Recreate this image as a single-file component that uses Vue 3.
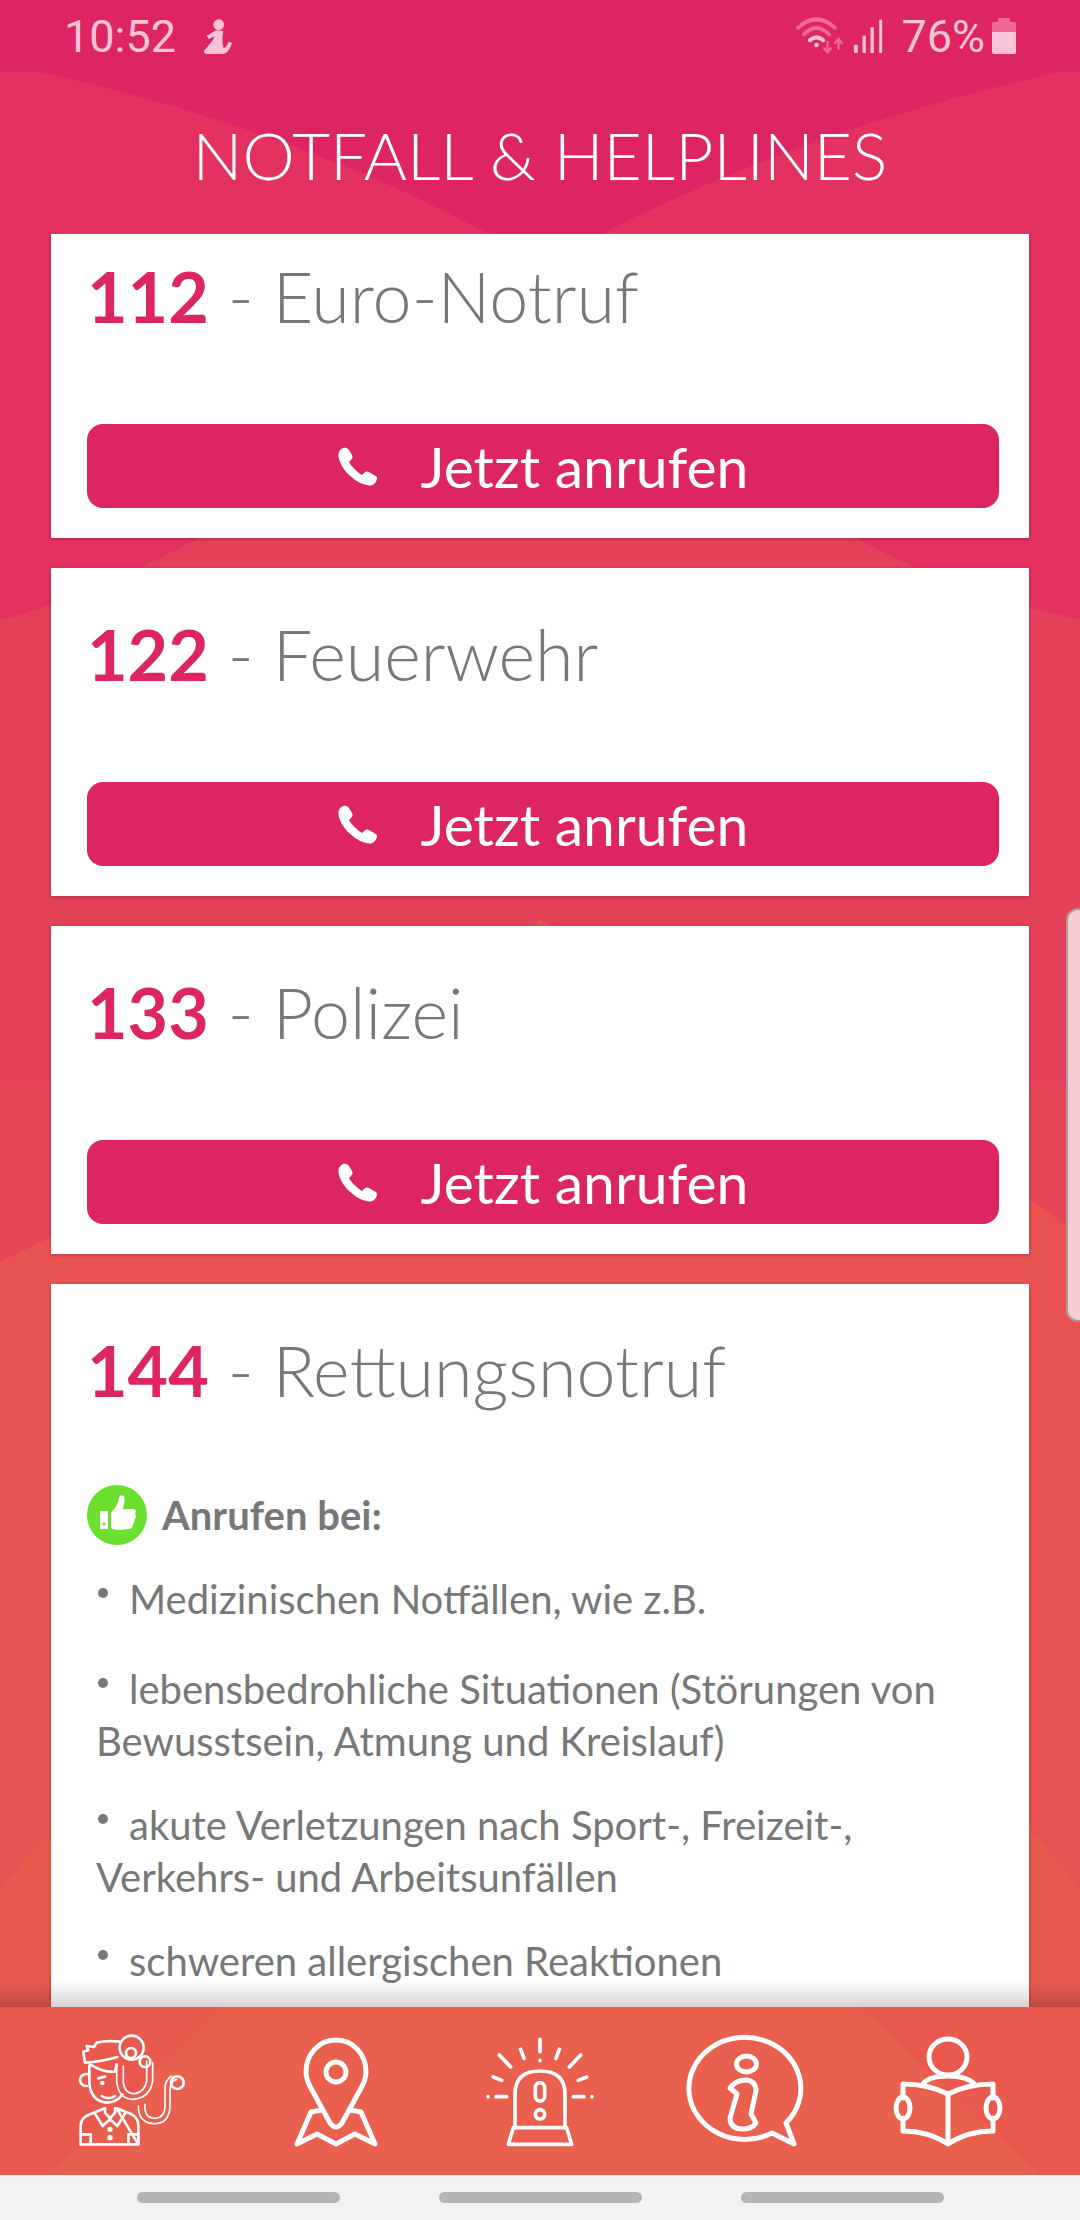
<script setup>
const lines = [
  'Medizinischen Notfällen, wie z.B.',
  'lebensbedrohliche Situationen (Störungen von Bewusstsein, Atmung und Kreislauf)',
  'akute Verletzungen nach Sport-, Freizeit-, Verkehrs- und Arbeitsunfällen',
  'schweren allergischen Reaktionen'
]

const numbers = [
  { nr: '112', name: 'Euro-Notruf' },
  { nr: '122', name: 'Feuerwehr' },
  { nr: '133', name: 'Polizei' }
]
</script>

<template>
  <div class="phone">
    <svg class="bg" viewBox="0 0 1080 2220" width="1080" height="2220" aria-hidden="true">
      <rect width="1080" height="2220" fill="#de2563" />
      <path d="M0 72H40Q300 130 500 240L300 700H0Z" fill="#e3325f" />
      <path d="M1080 72H1060Q800 130 590 240L800 700H1080Z" fill="#e3325f" />
      <path d="M0 620Q120 590 300 480Q440 400 540 400Q680 410 860 540Q950 590 1080 620V2220H0Z" fill="#e4415a" />
      <path d="M0 1085H1080V2220H0Z" fill="#e54558" />
      <path d="M0 1262Q300 1120 540 920Q800 1120 1030 1200L1080 1235V2220H0Z" fill="#e85352" />
      <path d="M0 1890Q60 1810 200 1720L540 1500L860 1700Q1000 1780 1080 1890V2220H0Z" fill="#e9594e" />
      <path d="M50 2175L220 2007H860L1040 2175Z" fill="#ea604f" />
    </svg>

    <div class="statusbar">
      <span class="time">10:52</span>
      <svg class="walker" viewBox="0 0 90 105" width="30" height="35">
        <circle cx="50" cy="17" r="16" />
        <path d="M42 34L14 50L20 60L38 52C34 64 24 76 10 90C2 98 6 105 16 105H62C74 104 84 92 90 72L80 68C78 76 72 84 65 88C60 72 60 52 64 36Z" />
      </svg>
      <div class="spacer"></div>
      <svg class="wifi" viewBox="40 15 155 120" width="52" height="40">
        <path d="M55 50Q110 0 165 50" class="dim" />
        <path d="M72 70Q110 32 148 70" class="dim" />
        <path d="M90 88Q110 70 130 88" class="lit" />
        <circle cx="110" cy="102" r="7" fill="#f8c3d6" />
        <path d="M143 92V122M133 112L143 124L153 112" class="dim arrow" />
        <path d="M176 114V86M166 96L176 84L186 96" class="dim arrow" />
      </svg>
      <svg class="signal" viewBox="0 0 95 105" width="32" height="35">
        <rect x="2" y="77" width="12" height="25" rx="3" />
        <rect x="28" y="50" width="10" height="52" />
        <rect x="52" y="25" width="10" height="77" />
        <rect x="78" y="2" width="9" height="100" />
      </svg>
      <span class="percent">76%</span>
      <svg class="battery" viewBox="0 0 24 36" width="24" height="36">
        <path d="M6 0H18V4H22Q24 4 24 6V14H0V6Q0 4 2 4H6Z" fill="#ee6a95" />
        <path d="M0 14H24V34Q24 36 22 36H2Q0 36 0 34Z" fill="#f8c3d6" />
      </svg>
    </div>

    <header class="head">
      <h1>NOTFALL &amp; HELPLINES</h1>
    </header>

    <main class="content">
      <div class="list">
        <section v-for="item in numbers" :key="item.nr" class="card">
          <h2><b>{{ item.nr }}</b> - {{ item.name }}</h2>
          <button class="call">
            <svg viewBox="0 0 39 39" width="39" height="39">
              <path d="M8 1C5 0 1 3 .5 7C0 12 3 19 9 26C16 33 24 38 31 38.5C35 39 38 36 39 32C39.5 30 38 29 36 28L31 25C29 24 27.500 24.500 26 26L24 28C20 26 13 19 11 15L13 13C14.500 11.500 15 10 14 8L11 3C10 1.500 9.500 1.500 8 1Z" fill="#fff" />
            </svg>
            <span>Jetzt anrufen</span>
          </button>
        </section>

        <section class="card card--long">
          <h2><b>144</b> - Rettungsnotruf</h2>
          <div class="when">
            <svg viewBox="0 0 60 60" width="60" height="60">
              <circle cx="30" cy="30" r="30" fill="#6ce02f" />
              <path d="M13 26H21V44H13Z" fill="#fff" />
              <circle cx="17" cy="39" r="1.500" fill="#6ce02f" />
              <path d="M24 28C27 24 31 20 32 13C33 9 37 10 37.500 13C38 18 36 22 36 24H46C49 24 49.500 27 48 29C49.500 31 49 33 47.500 34C48 36 47 38 46 39C46 42 44 44 42 44L31 45C28 45 26 44 24 43Z" fill="#fff" />
            </svg>
            <strong>Anrufen bei:</strong>
          </div>
          <p v-for="line in lines" :key="line"><i class="dot"></i>{{ line }}</p>
        </section>
      </div>
    </main>

    <div class="edge"></div>

    <nav class="tabs">
      <svg viewBox="0 0 375 360" width="125" height="120" class="ico ico--thin">
        <path d="M45 95L40 62L55 58L50 45L72 48L80 35Q110 28 150 32" />
        <path d="M45 95Q95 92 142 78" />
        <circle cx="185" cy="50" r="36" />
        <circle cx="183" cy="66" r="15" />
        <circle cx="225" cy="92" r="16" />
        <path d="M60 100Q100 125 135 122L140 100" />
        <path d="M58 105V155Q62 210 110 215Q140 215 158 190" />
        <path d="M58 132A18 18 0 1 0 50 165" />
        <path d="M85 142L105 137" />
        <circle cx="97" cy="156" r="3" />
        <path d="M95 195Q115 208 135 195" />
        <path class="tube" d="M140 105V150Q145 205 190 205Q240 200 248 150V95" />
        <path class="tube" d="M160 105V155Q165 190 195 188Q225 182 230 150V90" />
        <path class="tube" d="M205 225Q205 275 250 278Q295 280 300 230V180Q300 150 320 145" />
        <path class="tube" d="M225 220Q222 262 255 262Q285 260 285 225V175Q285 145 305 135" />
        <circle cx="322" cy="155" r="19" />
        <path d="M32 340V285Q32 260 60 250L105 232M140 232L185 250Q205 260 205 285V340Z" />
        <path d="M32 340H205M32 310H62V340M175 340V310H205" />
        <path d="M75 248L98 285L120 265L142 285L165 248M105 232V245L120 262L135 245V232" />
        <circle cx="120" cy="295" r="4" />
        <circle cx="120" cy="320" r="4" />
      </svg>

      <svg viewBox="0 0 100 120" width="100" height="120" class="ico">
        <path d="M50 9C32 9 20 24 20 41C20 49 23 54 26 59L44 92Q50 100 56 92L74 59C77 54 80 49 80 41C80 24 68 9 50 9Z" />
        <circle cx="50" cy="41" r="10" />
        <path d="M36 79L25 81L11 113L31 103L50 113L69 103L89 113L75 81L64 79" />
      </svg>

      <svg viewBox="0 0 360 360" width="120" height="120" class="ico ico--alarm">
        <path d="M105 290V190Q105 120 180 120Q255 120 255 190V290" />
        <path d="M85 340L100 290H260L275 340Z" />
        <rect x="166" y="155" width="28" height="55" rx="14" />
        <circle cx="180" cy="250" r="14" />
        <path d="M180 25V62M122 55L132 82M58 72L92 108M40 138L65 148M48 197H80M238 55L228 82M302 72L268 108M320 138L295 148M312 197H280" />
        <path d="M180 88V89M24 197V198M336 197V198" />
      </svg>

      <svg viewBox="0 0 120 120" width="120" height="120" class="ico">
        <path d="M88 102A56 51 0 1 1 102 92L110 113Z" />
        <ellipse cx="62.500" cy="33" rx="10" ry="8" />
        <path d="M46 57Q52 49 62 49Q72 50 72 60L67 83L72 92Q68 98 59 98Q46 98 46 87L53 63Z" />
      </svg>

      <svg viewBox="0 0 120 120" width="120" height="120" class="ico">
        <ellipse cx="60" cy="26" rx="19" ry="18" />
        <path d="M34 54Q40 45 60 45Q80 45 87 54" />
        <path d="M60 63Q40 53 15 53V67M15 87V100Q40 100 60 113Q80 100 105 100V87M105 67V53Q80 53 60 63V113" />
        <ellipse cx="15" cy="77" rx="7" ry="11" />
        <ellipse cx="105" cy="77" rx="7" ry="11" />
      </svg>
    </nav>

    <div class="sysbar">
      <span></span><span></span><span></span>
    </div>
  </div>
</template>

<style>
html,
body {
  margin: 0;
  background: #f2f2f2;
}
</style>

<style scoped>
.phone {
  position: relative;
  width: 1080px;
  height: 2220px;
  display: flex;
  flex-direction: column;
  overflow: hidden;
  font-family: Lato, "Liberation Sans", sans-serif;
}

.bg {
  position: absolute;
  top: 0;
  left: 0;
}

.statusbar {
  position: relative;
  height: 72px;
  flex: none;
  display: flex;
  align-items: center;
  padding: 0 64px 0 64px;
  box-sizing: border-box;
  background: #de2563;
  color: #f8c3d6;
  font-family: Roboto, sans-serif;
  font-size: 45px;
}

.time {
  width: 138px;
}

.walker,
.signal {
  fill: #f8c3d6;
}

.spacer {
  flex: 1;
}

.wifi {
  margin-right: 8px;
  fill: none;
}

.wifi path {
  stroke-width: 12;
  fill: none;
  stroke-linecap: round;
}

.wifi .arrow {
  stroke-width: 7;
}

.dim {
  stroke: #ee6a95;
}

.lit {
  stroke: #f8c3d6;
}

.signal {
  margin-right: 16px;
}

.percent {
  margin-right: 7px;
}

.head {
  position: relative;
  height: 162px;
  flex: none;
  display: flex;
  align-items: center;
  justify-content: center;
}

.head h1 {
  margin: 0;
  padding-top: 2px;
  color: #fff;
  font-size: 66px;
  font-weight: 300;
}

.content {
  position: relative;
  flex: 1;
  min-height: 0;
  overflow: hidden;
}

.list {
  margin-top: -24px;
  padding: 0 51px;
  display: flex;
  flex-direction: column;
  gap: 30px;
}

.card {
  height: 328px;
  box-sizing: border-box;
  padding: 0 30px 30px 36px;
  display: flex;
  flex-direction: column;
  background: #fff;
  box-shadow: 0 1px 4px rgba(0, 0, 0, 0.25);
}

.card--long {
  height: auto;
  padding-bottom: 60px;
}

.card h2 {
  margin: 42px 0 0;
  color: #777;
  font-size: 70px;
  line-height: 88px;
  font-weight: 300;
}

.card h2 b {
  color: #de2563;
  font-weight: 700;
}

.call {
  margin-top: auto;
  height: 84px;
  display: flex;
  align-items: center;
  justify-content: center;
  gap: 44px;
  border: 0;
  border-radius: 16px;
  background: #de2563;
  color: #fff;
  font-family: inherit;
  font-size: 57px;
}

.when {
  margin-top: 71px;
  display: flex;
  align-items: center;
  gap: 15px;
  color: #777;
  font-size: 40px;
}

.card p {
  margin: 32px 0 0 9px;
  color: #777;
  font-size: 40px;
  line-height: 52px;
}

.card .when + p {
  margin-top: 28px;
}

.card .when + p + p {
  margin-top: 38px;
}

.dot {
  display: inline-block;
  width: 10px;
  height: 10px;
  margin-right: 21px;
  margin-left: 2px;
  border-radius: 50%;
  background: #777;
  vertical-align: 16px;
}

.edge {
  position: absolute;
  top: 908px;
  right: -10px;
  width: 24px;
  height: 414px;
  box-sizing: border-box;
  border: 2px solid rgba(120, 120, 120, 0.6);
  border-radius: 12px;
  background: #f8cdd2;
}

.tabs {
  position: relative;
  height: 168px;
  flex: none;
  padding: 0 30px;
  display: grid;
  grid-template-columns: repeat(5, 1fr);
  justify-items: center;
  align-items: center;
}

.tabs::before {
  content: "";
  position: absolute;
  left: 0;
  right: 0;
  top: -27px;
  height: 27px;
  background: linear-gradient(rgba(0, 0, 0, 0), rgba(0, 0, 0, 0.17));
}

.ico {
  fill: none;
  stroke: #fff;
  stroke-width: 5;
  stroke-linejoin: round;
  stroke-linecap: round;
}

.ico--thin {
  stroke-width: 8;
}

.ico--thin .tube {
  stroke-width: 5;
}

.ico--alarm {
  stroke-width: 11;
}

.sysbar {
  position: relative;
  height: 45px;
  flex: none;
  display: flex;
  align-items: center;
  justify-content: center;
  gap: 99px;
  padding-bottom: 1px;
  box-sizing: border-box;
  background: #f2f2f2;
}

.sysbar span {
  width: 203px;
  height: 11px;
  border-radius: 6px;
  background: #b5b5b5;
}
</style>
